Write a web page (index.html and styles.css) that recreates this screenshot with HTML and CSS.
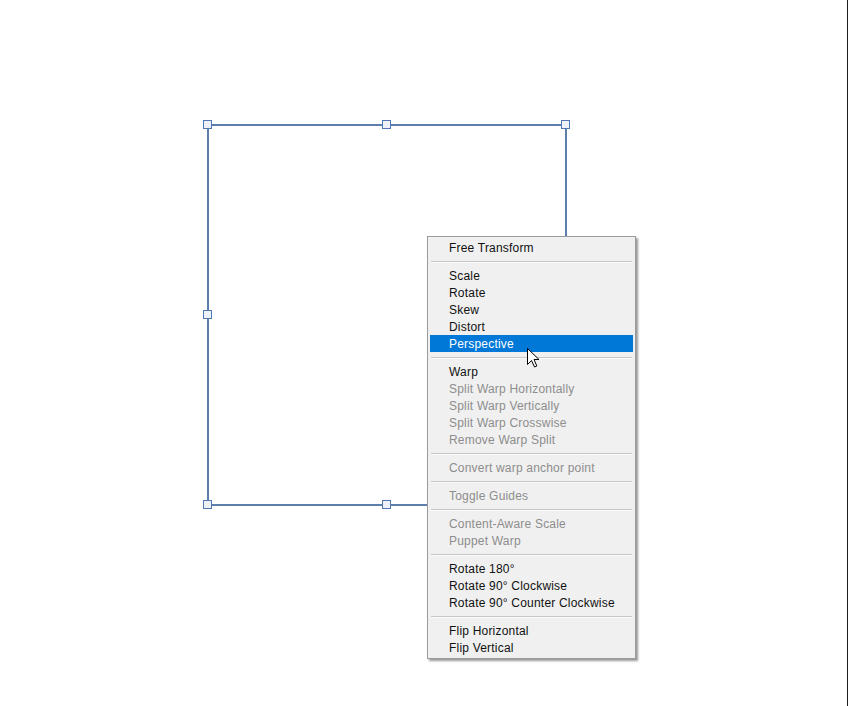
FILE: index.html
```html
<!DOCTYPE html>
<html>
<head>
  <meta charset="UTF-8">
  <title>Transform</title>
  <link rel="stylesheet" href="styles.css">
</head>
<body>
  <div class="canvas">
    <div class="bbox"></div>
    <span class="handle" style="left:203px; top:120px"></span>
    <span class="handle" style="left:382px; top:120px"></span>
    <span class="handle" style="left:561px; top:120px"></span>
    <span class="handle" style="left:203px; top:310px"></span>
    <span class="handle" style="left:561px; top:310px"></span>
    <span class="handle" style="left:203px; top:500px"></span>
    <span class="handle" style="left:382px; top:500px"></span>
    <span class="handle" style="left:561px; top:500px"></span>

    <ul class="menu">
      <li>Free Transform</li>
      <li class="sep"></li>
      <li>Scale</li>
      <li>Rotate</li>
      <li>Skew</li>
      <li>Distort</li>
      <li class="active">Perspective</li>
      <li class="sep"></li>
      <li>Warp</li>
      <li class="off">Split Warp Horizontally</li>
      <li class="off">Split Warp Vertically</li>
      <li class="off">Split Warp Crosswise</li>
      <li class="off">Remove Warp Split</li>
      <li class="sep"></li>
      <li class="off">Convert warp anchor point</li>
      <li class="sep"></li>
      <li class="off">Toggle Guides</li>
      <li class="sep"></li>
      <li class="off">Content-Aware Scale</li>
      <li class="off">Puppet Warp</li>
      <li class="sep"></li>
      <li>Rotate 180°</li>
      <li>Rotate 90° Clockwise</li>
      <li>Rotate 90° Counter Clockwise</li>
      <li class="sep"></li>
      <li>Flip Horizontal</li>
      <li>Flip Vertical</li>
    </ul>

    <svg class="cursor" width="14" height="21" viewBox="0 0 14 21">
      <path d="M0.5 0.5 L0.5 16.5 L4.5 12.5 L7.5 19 L9.8 18 L7 11.5 L12 11.5 Z" fill="#fff" stroke="#000" stroke-width="1" stroke-linejoin="miter"/>
    </svg>
  </div>
</body>
</html>
```

FILE: styles.css
```css
html, body {
  margin: 0;
  padding: 0;
  background: #fff;
}
.canvas {
  position: relative;
  width: 847px;
  height: 706px;
  border-right: 1px solid #1c1c1c;
  font-family: "Liberation Sans", Arial, sans-serif;
  font-size: 12px;
  overflow: hidden;
}
.bbox {
  position: absolute;
  left: 207px;
  top: 124px;
  width: 356px;
  height: 378px;
  border: 2px solid #5c7fab;
}
.handle {
  position: absolute;
  width: 7px;
  height: 7px;
  border: 1px solid #4f78b5;
  background: #eef2f8;
}
.menu {
  position: absolute;
  left: 427px;
  top: 236px;
  width: 203px;
  margin: 0;
  padding: 2px;
  list-style: none;
  background: #f0f0f0;
  border: 1px solid #9a9a9a;
  box-shadow: 2px 2px 2px rgba(0,0,0,0.4);
}
.menu li {
  height: 16px;
  line-height: 17px;
  padding: 1px 0 0 19px;
  color: #111;
  letter-spacing: 0.2px;
  white-space: nowrap;
}
.menu li.off {
  color: #8d8d8d;
}
.menu li.active {
  background: #0078d7;
  color: #fff;
}
.menu li.sep {
  height: 1px;
  padding: 0;
  margin: 5px 1px 4px 1px;
  background: #c8c8c8;
  border-bottom: 1px solid #fafafa;
}
.cursor {
  position: absolute;
  left: 527px;
  top: 348px;
}
```
